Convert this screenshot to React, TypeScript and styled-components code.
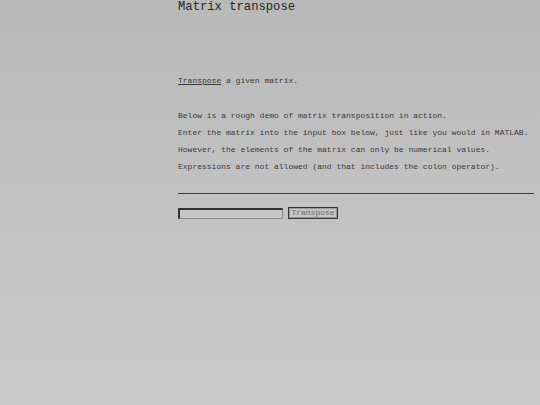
import React from "react";
import styled, { createGlobalStyle } from "styled-components";

const Global = createGlobalStyle`
  html, body { margin: 0; padding: 0; }
  body {
    min-height: 405px;
    background: linear-gradient(180deg, #b9b9b9 0%, #c2c2c2 50%, #cacaca 100%);
    font-family: "Liberation Mono", "Courier New", monospace;
    color: #3a3a3a;
  }
`;

const Page = styled.main`
  display: flex;
  flex-direction: column;
  margin-left: 178px;
  padding-top: 1px;
  width: 356px;
`;

const Title = styled.h1`
  margin: 0;
  font-size: 12.2px;
  line-height: 13px;
  font-weight: normal;
  color: #262626;
`;

const Lead = styled.p`
  margin: 58px 0 0;
  font-size: 8px;
  line-height: 17px;
`;

const Link = styled.a`
  color: #3a3a3a;
  text-decoration: underline;
`;

const Notes = styled.div`
  display: flex;
  flex-direction: column;
  margin-top: 18px;
`;

const Line = styled.p`
  margin: 0;
  font-size: 8px;
  line-height: 17px;
`;

const Rule = styled.hr`
  margin: 18px 0 0;
  border: 0;
  border-top: 1px solid #3c3c3c;
  height: 0;
`;

const Form = styled.form`
  display: flex;
  align-items: center;
  gap: 5px;
  margin-top: 13px;
`;

const Input = styled.input`
  box-sizing: border-box;
  width: 105px;
  height: 11px;
  padding: 0;
  background: #c6c6c6;
  border-style: solid;
  border-width: 2px 1px 1px 2px;
  border-color: #333 #8a8a8a #8a8a8a #333;
  font-family: inherit;
  font-size: 8px;
`;

const Button = styled.button`
  box-sizing: border-box;
  width: 50px;
  height: 12px;
  padding: 0;
  background: #c3c3c3;
  border: 1px solid #333;
  box-shadow: inset 0 0 0 1px #9a9a9a;
  font-family: inherit;
  font-size: 8px;
  line-height: 8px;
  color: #6e6e6e;
`;

export default function App() {
  return (
    <>
      <Global />
      <Page>
        <Title>Matrix transpose</Title>
        <Lead>
          <Link href="#">Transpose</Link> a given matrix.
        </Lead>
        <Notes>
          <Line>Below is a rough demo of matrix transposition in action.</Line>
          <Line>Enter the matrix into the input box below, just like you would in MATLAB.</Line>
          <Line>However, the elements of the matrix can only be numerical values.</Line>
          <Line>Expressions are not allowed (and that includes the colon operator).</Line>
        </Notes>
        <Rule />
        <Form onSubmit={(e) => e.preventDefault()}>
          <Input type="text" />
          <Button type="submit">Transpose</Button>
        </Form>
      </Page>
    </>
  );
}
